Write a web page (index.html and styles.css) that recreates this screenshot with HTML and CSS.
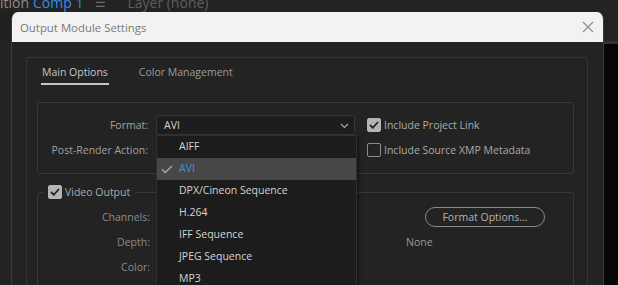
FILE: index.html
```html
<!DOCTYPE html>
<html lang="en">
<head>
  <meta charset="UTF-8">
  <title>Output Module Settings</title>
  <link rel="stylesheet" href="styles.css">
</head>
<body>
  <div class="app-strip">
    <span class="strip-name"><span>Composition</span></span>
    <span class="strip-comp">Comp 1</span>
    <span class="strip-menu">&#9776;</span>
    <span class="strip-layer">Layer (none)</span>
  </div>
  <div class="app-panels">
    <div class="panel-left"></div>
    <div class="panel-mid"></div>
    <div class="panel-right"></div>
  </div>

  <div class="dialog">
    <div class="titlebar">
      <span class="title">Output Module Settings</span>
      <svg class="close" width="12" height="12" viewBox="0 0 12 12">
        <path d="M1 1 L11 11 M11 1 L1 11" stroke="#8a8a8a" stroke-width="1.1" fill="none"/>
      </svg>
    </div>

    <div class="dialog-body">
      <div class="tab-panel">
        <div class="tabs">
          <span class="tab active">Main Options</span>
          <span class="tab">Color Management</span>
        </div>

        <div class="group format-group">
          <label class="field-label">Format:</label>
          <div class="select">
            <span>AVI</span>
            <svg class="chevron" width="9" height="6" viewBox="0 0 9 6">
              <path d="M1 1 L4.5 4.5 L8 1" stroke="#a8a8a8" stroke-width="1.1" fill="none"/>
            </svg>
            <ul class="menu">
              <li>AIFF</li>
              <li class="selected">
                <svg class="tick" width="12" height="9" viewBox="0 0 12 9">
                  <path d="M1 4.5 L4.2 7.5 L11 1" stroke="#acacac" stroke-width="1.3" fill="none"/>
                </svg>
                AVI
              </li>
              <li>DPX/Cineon Sequence</li>
              <li>H.264</li>
              <li>IFF Sequence</li>
              <li>JPEG Sequence</li>
              <li>MP3</li>
            </ul>
          </div>
          <div class="check-row">
            <span class="checkbox checked">
              <svg width="10" height="8" viewBox="0 0 10 8"><path d="M1 4 L3.8 6.8 L9 1" stroke="#222" stroke-width="1.8" fill="none"/></svg>
            </span>
            Include Project Link
          </div>

          <label class="field-label">Post-Render Action:</label>
          <div class="select empty"></div>
          <div class="check-row">
            <span class="checkbox"></span>
            Include Source XMP Metadata
          </div>
        </div>

        <fieldset class="group video-group">
          <legend>
            <span class="checkbox checked">
              <svg width="10" height="8" viewBox="0 0 10 8"><path d="M1 4 L3.8 6.8 L9 1" stroke="#222" stroke-width="1.8" fill="none"/></svg>
            </span>
            Video Output
          </legend>
          <div class="video-grid">
            <label class="field-label dim">Channels:</label>
            <span></span>
            <button class="pill-btn">Format Options...</button>

            <label class="field-label dim">Depth:</label>
            <span></span>
            <span class="value">None</span>

            <label class="field-label dim">Color:</label>
            <span></span>
            <span></span>
          </div>
        </fieldset>
      </div>
    </div>
  </div>
</body>
</html>
```

FILE: styles.css
```css
body {
  margin: 0;
  width: 618px;
  height: 285px;
  overflow: hidden;
  background: #1f1f1f;
  font-family: "Open Sans", "Noto Sans", sans-serif;
  font-size: 10.5px;
  position: relative;
}
.app-strip {
  height: 12px;
  background: #232323;
  white-space: nowrap;
  overflow: hidden;
  font-size: 14px;
  line-height: 12px;
  color: #8c8c8c;
  display: flex;
}
.app-strip > span {
  margin-top: -3px;
}
.strip-name {
  width: 29px;
  display: flex;
  justify-content: flex-end;
  overflow: hidden;
}
.strip-comp {
  color: #2f8ded;
  margin-left: 4px;
}
.strip-menu {
  color: #6e6e6e;
  margin-left: 12px;
  font-size: 12px;
}
.strip-layer {
  color: #5e5e5e;
  margin-left: 21px;
}
.app-panels {
  display: flex;
  height: 273px;
}
.panel-left {
  width: 11px;
  background: #1f1f1f;
  border-top: 29px solid #202020;
  box-shadow: inset 0 -244px 0 #232323;
}
.panel-mid {
  flex: 1;
}
.panel-right {
  width: 14px;
  background: #080505;
  border-top: 29px solid #222;
  box-shadow: inset 0 3px 0 #333;
}

.dialog {
  position: absolute;
  left: 11px;
  top: 12px;
  width: 593px;
  height: 273px;
  background: #232323;
  border-radius: 7px 7px 0 0;
  border-left: 1px solid #3a3a3a;
  border-right: 1px solid #3a3a3a;
  box-sizing: border-box;
  overflow: hidden;
}
.titlebar {
  height: 30px;
  background: #f2f2f2;
  display: flex;
  align-items: center;
  justify-content: space-between;
  padding: 0 9px 0 8px;
}
.title {
  color: #7a7a7a;
  font-size: 11.4px;
}
.dialog-body {
  padding: 15px 15px 0 14px;
}
.tab-panel {
  border: 1px solid #353535;
  border-bottom: none;
  border-radius: 3px 3px 0 0;
  padding: 0 13px 0 10px;
  height: 230px;
}
.tabs {
  display: flex;
  gap: 29px;
  padding: 6px 0 0 4px;
  height: 38px;
  box-sizing: border-box;
}
.tab {
  color: #9c9c9c;
  height: 19px;
  line-height: 17px;
  padding: 0 1px;
}
.tab.active {
  color: #c6c6c6;
  border-bottom: 2px solid #c4c4c4;
}

.group {
  border: 1px solid #383838;
  border-radius: 3px;
}
.format-group {
  margin-top: 6px;
  height: 72px;
  display: grid;
  grid-template-columns: 110px 199px auto;
  grid-auto-rows: 20px;
  column-gap: 8px;
  row-gap: 5px;
  padding-top: 12px;
  box-sizing: border-box;
  align-items: center;
}
.format-group .check-row {
  margin-left: 4px;
}
.field-label {
  text-align: right;
  color: #a0a0a0;
}
.field-label.dim {
  color: #8c8c8c;
}
.select {
  position: relative;
  height: 20px;
  background: #1d1d1d;
  border: 1px solid #353535;
  border-radius: 2px;
  box-sizing: border-box;
  display: flex;
  align-items: center;
  justify-content: space-between;
  padding: 0 5px 0 7px;
  color: #d2d2d2;
}
.chevron {
  margin-top: 1px;
}
.menu {
  position: absolute;
  left: -1px;
  top: 19px;
  width: 199px;
  margin: 0;
  padding: 0;
  list-style: none;
  background: #1c1c1c;
  border: 1px solid #303030;
  box-shadow: 2px 2px 3px rgba(0, 0, 0, 0.45);
  z-index: 2;
}
.menu li {
  position: relative;
  height: 22px;
  line-height: 21px;
  padding-left: 22px;
  color: #d4d4d4;
}
.menu li.selected {
  background: #474747;
  color: #3c8fe8;
}
.tick {
  position: absolute;
  left: 4px;
  top: 7px;
}
.check-row {
  display: flex;
  align-items: center;
  gap: 3px;
  color: #aaaaaa;
  white-space: nowrap;
}
.checkbox {
  width: 14px;
  height: 14px;
  box-sizing: border-box;
  border: 1.5px solid #8c8c8c;
  border-radius: 2px;
  display: inline-flex;
  align-items: center;
  justify-content: center;
}
.checkbox.checked {
  background: #b4b4b4;
  border-color: #b4b4b4;
}

.video-group {
  margin: 10px 0 0 0;
  padding: 0;
  height: 120px;
  box-sizing: border-box;
}
.video-group legend {
  margin-left: 5px;
  padding: 0 5px;
  display: flex;
  align-items: center;
  gap: 3px;
  color: #aaaaaa;
  height: 16px;
}
.video-grid {
  display: grid;
  grid-template-columns: 112px 256px 1fr;
  grid-auto-rows: 20px;
  row-gap: 5px;
  align-items: center;
  padding-top: 7px;
}
.pill-btn {
  justify-self: start;
  margin-left: 19px;
  width: 120px;
  height: 20px;
  border: 1.5px solid #8a8a8a;
  border-radius: 10px;
  background: transparent;
  color: #b2b2b2;
  font-family: inherit;
  font-size: 10.5px;
  padding: 0;
}
.value {
  color: #9a9a9a;
}
```
